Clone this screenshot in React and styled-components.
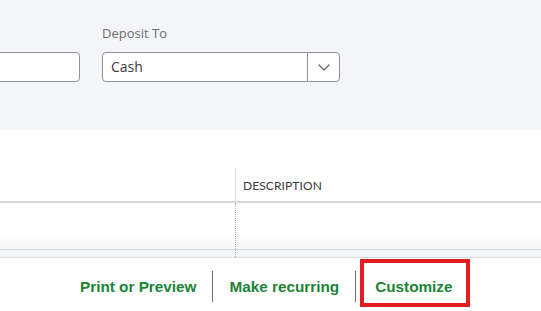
import React from "react";
import styled, { createGlobalStyle } from "styled-components";

const GlobalStyle = createGlobalStyle`
  html, body { margin: 0; padding: 0; background: #ffffff; }
  body { overflow: hidden; }
  * { box-sizing: border-box; }
`;

const Page = styled.div`
  width: 541px;
  height: 311px;
  overflow: hidden;
  display: flex;
  flex-direction: column;
  font-family: "Open Sans", "Liberation Sans", sans-serif;
`;

const TopPanel = styled.section`
  height: 130px;
  flex: none;
  background: #f4f5f8;
  padding-top: 24px;
`;

const FieldRow = styled.div`
  display: flex;
  gap: 22px;
  align-items: flex-start;
`;

const Field = styled.div`
  display: flex;
  flex-direction: column;
  gap: 10px;
  width: ${(p) => p.$width}px;
  margin-left: ${(p) => p.$offset || 0}px;
`;

const Label = styled.label`
  height: 18px;
  font-size: 13px;
  line-height: 18px;
  color: #6b6c72;
`;

const InputBox = styled.div`
  height: 30px;
  background: #ffffff;
  border: 1px solid #8d9096;
  border-radius: 4px;
  display: flex;
  align-items: stretch;
`;

const Value = styled.div`
  flex: 1;
  padding-left: 8px;
  font-size: 14px;
  line-height: 28px;
  color: #393a3d;
`;

const Caret = styled.div`
  width: 32px;
  flex: none;
  border-left: 1px solid #8d9096;
  display: flex;
  align-items: center;
  justify-content: center;
`;

const TableArea = styled.section`
  flex: none;
  padding-top: 38px;
  background: #ffffff;
`;

const Row = styled.div`
  display: flex;
  height: ${(p) => p.$h}px;
  background: ${(p) => p.$bg || "transparent"};
  border-top: ${(p) => (p.$top ? `1px solid ${p.$top}` : "none")};
  border-bottom: ${(p) => (p.$bottom ? p.$bottom : "none")};
`;

const Cell = styled.div`
  width: ${(p) => (p.$w ? `${p.$w}px` : "auto")};
  flex: ${(p) => (p.$w ? "none" : "1")};
  border-left: ${(p) => p.$divider || "none"};
  padding-left: 7px;
  display: flex;
  align-items: center;
`;

const HeadText = styled.span`
  font-family: Lato, "Liberation Sans", sans-serif;
  font-size: 12px;
  color: #393a3d;
  text-transform: uppercase;
  letter-spacing: 0.1px;
  padding-top: 2px;
`;

const Footer = styled.footer`
  flex: 1;
  display: flex;
  align-items: center;
  gap: 16px;
  padding: 4px 0 0 80px;
  background: #ffffff;
`;

const Link = styled.a`
  position: relative;
  font-family: "Liberation Sans", Arial, sans-serif;
  font-weight: 700;
  font-size: 15.3px;
  line-height: 20px;
  color: #1a8535;
  text-decoration: none;
  white-space: nowrap;
  margin-left: ${(p) => (p.$highlight ? 3 : 0)}px;

  ${(p) =>
    p.$highlight &&
    `
    &::after {
      content: "";
      position: absolute;
      left: -15px;
      right: -18px;
      top: -18px;
      bottom: -10px;
      border: 4px solid #e41b1f;
    }
  `}
`;

const Divider = styled.span`
  width: 1px;
  height: 31px;
  background: #6b6c72;
  flex: none;
`;

export default function App() {
  return (
    <>
      <GlobalStyle />
      <Page>
        <TopPanel>
          <FieldRow>
            <Field $width={180} $offset={-100}>
              <Label />
              <InputBox />
            </Field>
            <Field $width={238}>
              <Label>Deposit To</Label>
              <InputBox>
                <Value>Cash</Value>
                <Caret>
                  <svg width="12" height="7" viewBox="0 0 12 7">
                    <path
                      d="M1 1l5 5 5-5"
                      fill="none"
                      stroke="#6b6c72"
                      strokeWidth="1.4"
                      strokeLinecap="round"
                      strokeLinejoin="round"
                    />
                  </svg>
                </Caret>
              </InputBox>
            </Field>
          </FieldRow>
        </TopPanel>
        <TableArea>
          <Row $h={35} $bottom="2px solid #d4d7dc">
            <Cell $w={235} />
            <Cell $divider="1px solid #dcdee2">
              <HeadText>Description</HeadText>
            </Cell>
          </Row>
          <Row $h={46} $bg="linear-gradient(to bottom, #ffffff 60%, #f6f6f7 100%)">
            <Cell $w={235} />
            <Cell $divider="1px dotted #a8abb0" />
          </Row>
          <Row $h={9} $bg="#f4f5f6" $top="#d6d8db" $bottom="1px solid #d6d8db">
            <Cell $w={235} />
            <Cell $divider="1px dotted #a8abb0" />
          </Row>
        </TableArea>
        <Footer>
          <Link>Print or Preview</Link>
          <Divider />
          <Link>Make recurring</Link>
          <Divider />
          <Link $highlight>Customize</Link>
        </Footer>
      </Page>
    </>
  );
}
